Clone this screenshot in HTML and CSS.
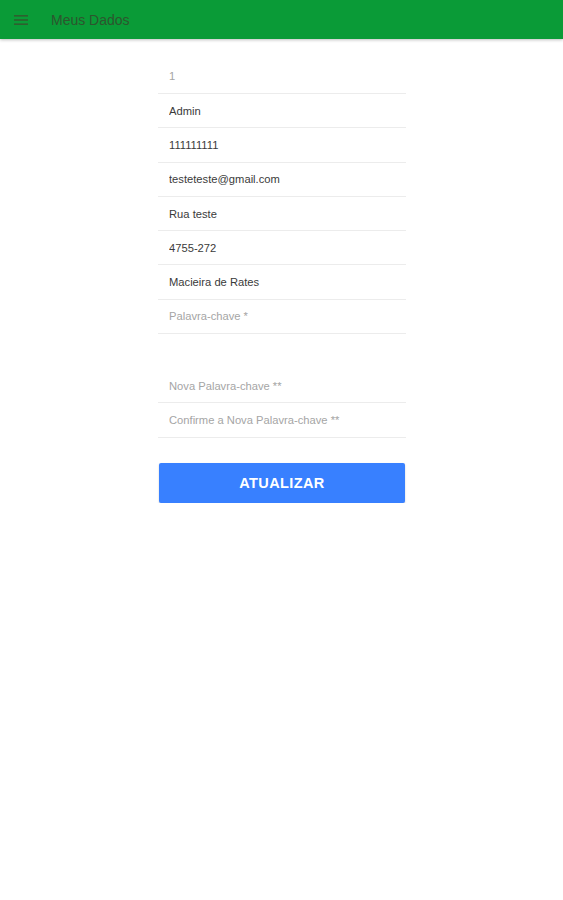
FILE: index.html
```html
<!DOCTYPE html>
<html lang="pt">
<head>
  <meta charset="UTF-8" />
  <meta name="viewport" content="width=device-width, initial-scale=1" />
  <title>Meus Dados</title>
  <link rel="stylesheet" href="styles.css">
</head>
<body>
  <header class="toolbar">
    <button class="menu-btn" aria-label="menu">
      <svg width="14" height="10" viewBox="0 0 14 10">
        <rect x="0" y="0" width="14" height="1.6" fill="#2f5f2f" />
        <rect x="0" y="4.2" width="14" height="1.6" fill="#2f5f2f" />
        <rect x="0" y="8.4" width="14" height="1.6" fill="#2f5f2f" />
      </svg>
    </button>
    <h1 class="title">Meus Dados</h1>
  </header>

  <main class="content">
    <form class="form">
      <div class="item"><input type="text" placeholder="1" /></div>
      <div class="item"><input type="text" value="Admin" /></div>
      <div class="item"><input type="text" value="111111111" /></div>
      <div class="item"><input type="email" value="testeteste@gmail.com" /></div>
      <div class="item"><input type="text" value="Rua teste" /></div>
      <div class="item"><input type="text" value="4755-272" /></div>
      <div class="item"><input type="text" value="Macieira de Rates" /></div>
      <div class="item"><input type="password" placeholder="Palavra-chave *" /></div>

      <div class="spacer"></div>

      <div class="item"><input type="password" placeholder="Nova Palavra-chave **" /></div>
      <div class="item"><input type="password" placeholder="Confirme a Nova Palavra-chave **" /></div>

      <button type="button" class="submit">ATUALIZAR</button>
    </form>
  </main>
</body>
</html>
```

FILE: styles.css
```css
* {
  box-sizing: border-box;
}
body {
  margin: 0;
  font-family: "Liberation Sans", Arial, sans-serif;
  background: #fff;
}
.toolbar {
  height: 39px;
  background: #0a9b37;
  display: flex;
  align-items: center;
  padding-left: 14px;
  box-shadow: 0 1px 3px rgba(0,0,0,0.25);
}
.menu-btn {
  background: none;
  border: none;
  padding: 0;
  width: 14px;
  height: 10px;
  display: flex;
  margin-right: 23px;
  margin-top: 1px;
}
.title {
  margin: 0;
  font-size: 14px;
  font-weight: 400;
  color: #2d552e;
}
.content {
  display: flex;
  justify-content: center;
  padding-top: 20.7px;
}
.form {
  width: 248px;
  margin-left: 1px;
}
.item {
  height: 34.3px;
  border-bottom: 1px solid #ececec;
  display: flex;
  align-items: center;
  padding-left: 11px;
}
.item input {
  border: none;
  outline: none;
  width: 100%;
  font-family: inherit;
  font-size: 11.2px;
  color: #3a3a3a;
  padding: 0;
  background: transparent;
}
.item input::placeholder {
  color: #a5a5a5;
}
.spacer {
  height: 35px;
}
.submit {
  display: block;
  width: 246px;
  height: 40px;
  margin: 25.7px 0 0 1px;
  border: none;
  border-radius: 2px;
  background: #3880ff;
  color: #fff;
  font-family: inherit;
  font-size: 14.5px;
  font-weight: 700;
  letter-spacing: 0.4px;
  box-shadow: 0 1px 2px rgba(0,0,0,0.2);
}
```
